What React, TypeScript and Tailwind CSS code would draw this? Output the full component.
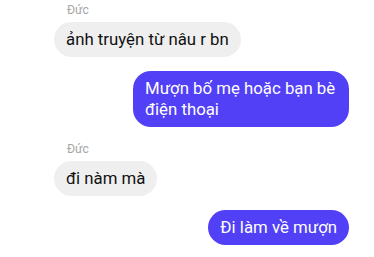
import React from 'react';

const Received = ({ name, text }: { name?: string; text: string }) => (
  <div className="flex flex-col items-start">
    {name && <div className="ml-[13px] mb-[4px] text-[12px] leading-[16px] text-[#a6a6a6]">{name}</div>}
    <div className="rounded-[18px] bg-[#efefef] px-[12px] py-[7px] text-[16.8px] leading-[21px] text-[#111]">{text}</div>
  </div>
);

const Sent = ({ children }: { children: React.ReactNode }) => (
  <div className="flex justify-end">
    <div className="max-w-[216px] rounded-[18px] bg-[#5140f5] px-[12px] py-[7px] text-[16.8px] leading-[21px] text-white">
      {children}
    </div>
  </div>
);

const App = () => {
  return (
    <div className="w-[374px] h-[257px] overflow-hidden bg-white pl-[54px] pr-[25px] pt-[2px] font-['Roboto',sans-serif]">
      <div className="flex flex-col gap-[14px]">
        <Received name="Đức" text="ảnh truyện từ nâu r bn" />
        <Sent>Mượn bố mẹ hoặc bạn bè điện thoại</Sent>
        <Received name="Đức" text="đi nàm mà" />
        <Sent>Đi làm về mượn</Sent>
      </div>
    </div>
  );
};

export default App;
